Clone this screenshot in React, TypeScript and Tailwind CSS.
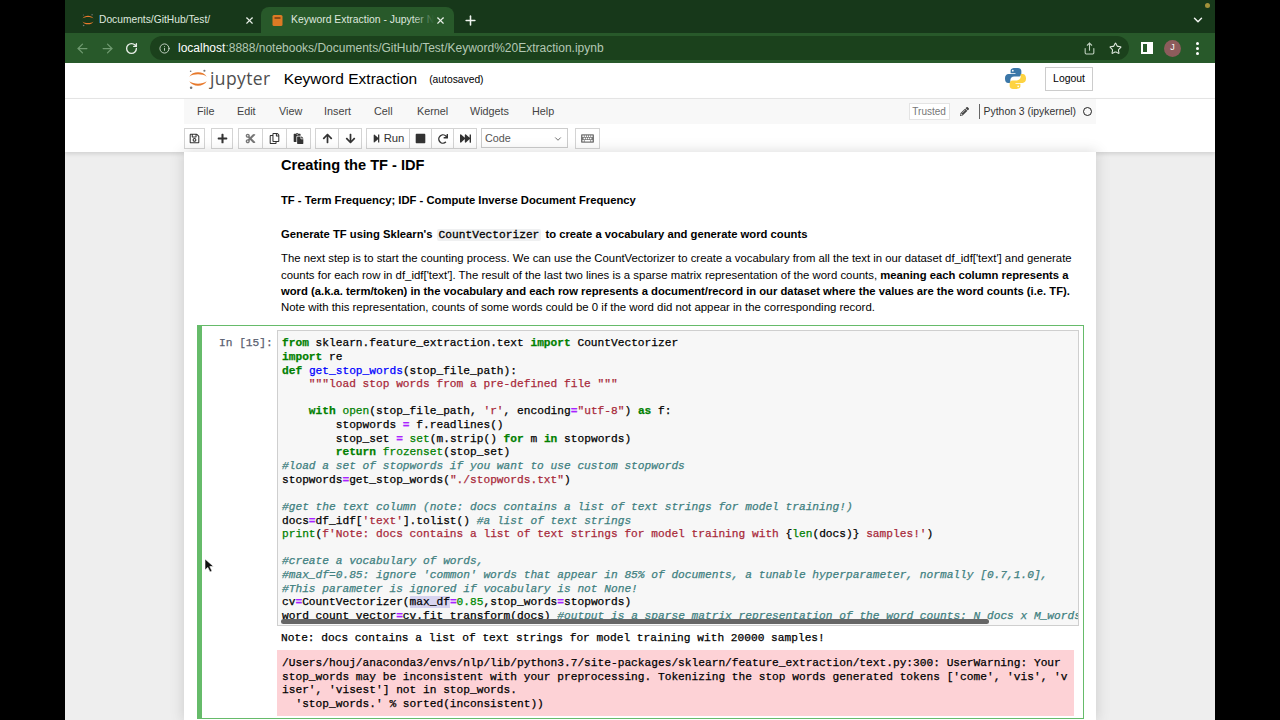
import React from "react";
import { ArrowLeft, ArrowRight, RotateCw, Info, Share, Star, ChevronDown, Plus, X } from "lucide-react";
import { FaRegSave, FaPlus, FaCut, FaRegCopy, FaPaste, FaArrowUp, FaArrowDown, FaStepForward, FaStop, FaRedo, FaFastForward, FaKeyboard, FaPencilAlt } from "react-icons/fa";

const JupyterLogo = ({ size = 24 }: { size?: number }) => (
  <svg width={size} height={size} viewBox="0 0 24 24">
    <path d="M2.5 9.5 C6 3 18 3 21.5 9.5 C17 6 7 6 2.5 9.5 Z" fill="#e8792b" />
    <path d="M2.5 14.5 C6 21 18 21 21.5 14.5 C17 18 7 18 2.5 14.5 Z" fill="#e8792b" />
    <circle cx="19" cy="3" r="1.2" fill="#767677" />
    <circle cx="4" cy="3.5" r="0.9" fill="#767677" />
    <circle cx="4.5" cy="21.5" r="1.4" fill="#767677" />
  </svg>
);

const PythonLogo = () => (
  <svg width="23" height="23" viewBox="0 0 24 24">
    <path d="M11.8 1C7.2 1 6.9 3 6.9 3.8V6.6h5.1v.8H4.6C2.6 7.4 1 9 1 12s1.4 4.8 3.4 4.8h2.2v-3c0-2.2 1.8-3.8 3.9-3.8h4.6c1.7 0 3-1.4 3-3V3.9C18.1 2.2 16.4 1 14.6 1z" fill="#3b77a8" />
    <circle cx="9.2" cy="3.8" r="0.9" fill="#fff" />
    <path d="M12.2 23c4.6 0 4.9-2 4.9-2.8v-2.8H12v-.8h7.4c2 0 3.6-1.6 3.6-4.6s-1.4-4.8-3.4-4.8h-2.2v3c0 2.2-1.8 3.8-3.9 3.8H8.9c-1.7 0-3 1.4-3 3v3.1C5.9 21.8 7.6 23 9.4 23z" fill="#fdd341" />
    <circle cx="14.8" cy="20.2" r="0.9" fill="#fff" />
  </svg>
);

const K = ({ children }: { children: React.ReactNode }) => <span className="font-bold text-[#008000]">{children}</span>;
const B = ({ children }: { children: React.ReactNode }) => <span className="text-[#008000]">{children}</span>;
const S = ({ children }: { children: React.ReactNode }) => <span className="text-[#a8293a]">{children}</span>;
const C = ({ children }: { children: React.ReactNode }) => <span className="italic text-[#408080]">{children}</span>;
const O = ({ children }: { children: React.ReactNode }) => <span className="font-bold text-[#aa22ff]">{children}</span>;

const L = ({ children }: { children?: React.ReactNode }) => <div className="h-[13.65px]">{children}</div>;

const Btn = ({ children, className = "" }: { children: React.ReactNode; className?: string }) => (
  <div className={"flex h-[21px] items-center justify-center border border-[#d4d4d4] bg-white text-[#333] " + className}>{children}</div>
);

export default function App() {
  return (
    <div className="flex h-[720px] w-[1280px] overflow-hidden bg-black font-['Liberation_Sans',Arial,sans-serif]">
      <div className="w-[65px] shrink-0 bg-black" />
      <div className="flex w-[1150px] shrink-0 flex-col bg-[#eeeeee]">
        {/* tab strip */}
        <div className="relative flex h-[33px] shrink-0 items-end bg-[#17381a] pl-[1px]">
          <div className="flex h-[26px] w-[195px] items-center pl-[15px] pr-[6px] text-[#dfe8df]">
            <JupyterLogo size={14} />
            <span className="ml-[4px] text-[10.25px]">Documents/GitHub/Test/</span>
            <X size={11} strokeWidth={2.5} className="ml-auto text-[#e8efe8]" />
          </div>
          <div className="relative flex h-[26px] w-[193px] items-center rounded-t-lg bg-[#28592a] pl-[11px] pr-[8px] text-[10.4px] text-[#dfe8df]">
            <svg width="11" height="13" viewBox="0 0 11 13" className="mr-[8px] shrink-0"><rect x="0.5" y="1" width="10" height="11" rx="1.5" fill="#dd7a24" /><rect x="2.5" y="3" width="6" height="2" fill="#8c4b14" /></svg>
            <span className="w-[143px] overflow-hidden whitespace-nowrap pb-[1px]">Keyword Extraction - Jupyter Notebook</span>
            <div className="absolute right-[20px] top-0 h-full w-[22px] bg-gradient-to-r from-transparent to-[#28592a]" />
            <X size={11} strokeWidth={2.5} className="ml-auto shrink-0 text-[#e8efe8]" />
          </div>
          <Plus size={15} strokeWidth={2.5} className="mb-[5px] ml-[9px] text-[#f0f4f0]" />
          <ChevronDown size={14} strokeWidth={2.5} className="mb-[6px] ml-auto mr-[10px] text-[#f0f4f0]" />
          <div className="absolute right-[5px] top-[3px] h-[5px] w-[5px] rounded-full bg-[#a3913a]" />
        </div>
        {/* url bar */}
        <div className="flex h-[30px] shrink-0 items-center bg-[#28592a] pl-[10px] pr-[10px] text-[#e8efe8]">
          <ArrowLeft size={15} className="text-[#6f9a70]" />
          <ArrowRight size={15} className="ml-[10px] text-[#6f9a70]" />
          <RotateCw size={13} strokeWidth={2.5} className="ml-[10px]" />
          <div className="ml-[12px] flex h-[24px] w-[979px] items-center rounded-full bg-[#1b411c] pl-[9px] pr-[1px]">
            <Info size={11} className="text-[#d0dcd0]" />
            <span className="ml-[8px] text-[12px] text-[#b4c8b4]"><span className="text-white">localhost</span>:8888/notebooks/Documents/GitHub/Test/Keyword%20Extraction.ipynb</span>
            <Share size={13} className="ml-auto text-[#c2d2c2]" />
            <Star size={13} className="ml-[13px] mr-[6px] text-[#dfe8df]" />
          </div>
          <div className="ml-[12px] flex h-[12px] w-[12px] border-2 border-white"><div className="ml-auto h-full w-[4px] bg-white" /></div>
          <div className="ml-[11px] flex h-[17px] w-[17px] items-center justify-center rounded-full bg-[#8d5c5c] text-[9px] text-white">J</div>
          <div className="ml-[15px] flex flex-col gap-[2px]">
            <div className="h-[3px] w-[3px] rounded-full bg-white" />
            <div className="h-[3px] w-[3px] rounded-full bg-white" />
            <div className="h-[3px] w-[3px] rounded-full bg-white" />
          </div>
        </div>
        {/* header */}
        <div className="flex h-[36px] shrink-0 items-center border-b border-[#e7e7e7] bg-white pb-[4px] pl-[122px] pr-[122px]">
          <JupyterLogo size={22} />
          <span className="ml-[1px] font-['Open_Sans','Liberation_Sans',sans-serif] text-[17.5px] tracking-[0.4px] text-[#4e4e4e]">jupyter</span>
          <span className="ml-[13px] text-[15.5px] text-black">Keyword Extraction</span>
          <span className="ml-[12px] mt-[2px] text-[10.3px] text-black">(autosaved)</span>
          <div className="ml-auto"><PythonLogo /></div>
          <div className="ml-[18px] flex h-[24px] w-[48px] items-center justify-center border border-[#cccccc] text-[10.4px] text-black">Logout</div>
        </div>
        {/* menu + toolbar band */}
        <div className="shrink-0 bg-white pl-[119px] pr-[119px] shadow-[0_2px_4px_rgba(0,0,0,0.12)]">
          <div className="flex h-[25px] items-center bg-[#f8f8f8] pl-[13px] pr-[4px] text-[10.8px] text-[#444]">
            <span className="w-[40px]">File</span>
            <span className="w-[42px]">Edit</span>
            <span className="w-[45px]">View</span>
            <span className="w-[50px]">Insert</span>
            <span className="w-[43px]">Cell</span>
            <span className="w-[53px]">Kernel</span>
            <span className="w-[62px]">Widgets</span>
            <span>Help</span>
            <div className="ml-auto flex h-[17px] w-[41px] items-center justify-center border border-[#e4e4e4] bg-white text-[10px] text-[#777]">Trusted</div>
            <FaPencilAlt size={9} className="ml-[10px] text-[#444]" />
            <div className="ml-[10px] h-[15px] w-px bg-[#666]" />
            <span className="ml-[4px] text-[10.4px] text-[#333]">Python 3 (ipykernel)</span>
            <div className="ml-[7px] h-[9px] w-[9px] rounded-full border-[1.5px] border-[#222]" />
          </div>
          <div className="flex h-[28px] items-start bg-white pt-[4px] text-[#333]">
            <Btn className="w-[21px]"><FaRegSave size={11} /></Btn>
            <Btn className="ml-[6px] w-[22px]"><FaPlus size={11} /></Btn>
            <Btn className="ml-[5px] w-[25px]"><FaCut size={11} className="text-[#777]" /></Btn>
            <Btn className="ml-[-1px] w-[25px]"><FaRegCopy size={11} /></Btn>
            <Btn className="ml-[-1px] w-[25px]"><FaPaste size={11} /></Btn>
            <Btn className="ml-[4px] w-[24px]"><FaArrowUp size={11} /></Btn>
            <Btn className="ml-[-1px] w-[24px]"><FaArrowDown size={11} /></Btn>
            <Btn className="ml-[4px] w-[44px] text-[11.3px]"><FaStepForward size={9} className="mr-[3px]" />Run</Btn>
            <Btn className="ml-[-1px] w-[23px]"><FaStop size={11} /></Btn>
            <Btn className="ml-[-1px] w-[23px]"><FaRedo size={10} /></Btn>
            <Btn className="ml-[-1px] w-[24px]"><FaFastForward size={11} /></Btn>
            <div className="ml-[4px] flex h-[20px] w-[87px] items-center border border-[#cccccc] bg-white pl-[3px] pr-[4px] pt-[1px] text-[10.8px] text-[#555]">
              Code
              <ChevronDown size={10} className="ml-auto" />
            </div>
            <Btn className="ml-[7px] w-[25px]"><FaKeyboard size={13} className="text-[#777]" /></Btn>
          </div>
        </div>
        {/* notebook */}
        <div className="ml-[119px] w-[912px] flex-1 overflow-hidden bg-white shadow-[0_0_12px_1px_rgba(87,87,87,0.2)]">
          <div className="whitespace-nowrap pl-[97px] pr-[20px] text-[11.4px] leading-[16.2px] text-black">
            <div className="pt-[4px] text-[14.6px] font-bold leading-[18px]">Creating the TF - IDF</div>
            <div className="pt-[18px] text-[11.25px] font-bold">TF - Term Frequency; IDF - Compute Inverse Document Frequency</div>
            <div className="pt-[18px] text-[11.25px] font-bold">
              Generate TF using Sklearn's <code className="mx-[1px] rounded-[2px] bg-[#eff0f1] px-[2px] font-['Liberation_Mono',monospace] text-[11.2px] font-normal [-webkit-text-stroke:0.3px]">CountVectorizer</code> to create a vocabulary and generate word counts
            </div>
            <div className="pt-[7px]">
              <span className="text-[11.34px]">The next step is to start the counting process. We can use the CountVectorizer to create a vocabulary from all the text in our dataset df_idf['text'] and generate</span><br />
              counts for each row in df_idf['text']. The result of the last two lines is a sparse matrix representation of the word counts, <b className="text-[11.25px]">meaning each column represents a</b><br />
              <b className="text-[11.25px]">word (a.k.a. term/token) in the vocabulary and each row represents a document/record in our dataset where the values are the word counts (i.e. TF).</b><br />
              Note with this representation, counts of some words could be 0 if the word did not appear in the corresponding record.
            </div>
          </div>
          {/* cell */}
          <div className="ml-[13px] mt-[10px] flex h-[394px] w-[887px] flex-col border border-[#66bb6a] border-l-[5px] pl-[75px] pr-[4px] pt-[4px] font-['Liberation_Mono',monospace] text-[11.2px] leading-[13.65px] text-black [-webkit-text-stroke:0.25px]">
            <div className="relative">
              <div className="absolute left-[-58px] top-[7px] text-[#5a6070]">In [15]:</div>
              <div className="relative h-[296px] overflow-hidden whitespace-pre border border-[#cfcfcf] bg-[#f7f7f7] pl-[4px] pt-[6px]">
                <L><K>from</K> sklearn.feature_extraction.text <K>import</K> CountVectorizer</L>
                <L><K>import</K> re</L>
                <L><K>def</K> <span className="text-[#0000ff]">get_stop_words</span>(stop_file_path):</L>
                <L>    <S>"""load stop words from a pre-defined file """</S></L>
                <L />
                <L>    <K>with</K> <B>open</B>(stop_file_path, <S>'r'</S>, encoding<O>=</O><S>"utf-8"</S>) <K>as</K> f:</L>
                <L>        stopwords <O>=</O> f.readlines()</L>
                <L>        stop_set <O>=</O> <B>set</B>(m.strip() <K>for</K> m <K>in</K> stopwords)</L>
                <L>        <K>return</K> <B>frozenset</B>(stop_set)</L>
                <L><C>#load a set of stopwords if you want to use custom stopwords</C></L>
                <L>stopwords<O>=</O>get_stop_words(<S>"./stopwords.txt"</S>)</L>
                <L />
                <L><C>#get the text column (note: docs contains a list of text strings for model training!)</C></L>
                <L>docs<O>=</O>df_idf[<S>'text'</S>].tolist() <C>#a list of text strings</C></L>
                <L><B>print</B>(<S>f'Note: docs contains a list of text strings for model training with </S>{"{"}<B>len</B>(docs){"}"}<S> samples!'</S>)</L>
                <L />
                <L><C>#create a vocabulary of words,</C></L>
                <L><C>#max_df=0.85: ignore 'common' words that appear in 85% of documents, a tunable hyperparameter, normally [0.7,1.0],</C></L>
                <L><C>#This parameter is ignored if vocabulary is not None!</C></L>
                <L>cv<O>=</O>CountVectorizer(<span className="bg-[#d7d4f0]">max_df</span><O>=</O><span className="text-[#008800]">0.85</span>,stop_words<O>=</O>stopwords)</L>
                <L>word_count_vector<O>=</O>cv.fit_transform(docs) <C>#output is a sparse matrix representation of the word counts: N_docs x M_words</C></L>
                <div className="absolute bottom-[1px] left-[3px] h-[5px] w-[708px] rounded-full bg-[#666666]" />
              </div>
            </div>
            <div className="whitespace-pre pl-[4px] pt-[6px]">Note: docs contains a list of text strings for model training with 20000 samples!</div>
            <div className="mr-[5px] mt-[4px] whitespace-pre bg-[#fdd2d6] pb-[4px] pl-[5px] pt-[7px]">
              /Users/houj/anaconda3/envs/nlp/lib/python3.7/site-packages/sklearn/feature_extraction/text.py:300: UserWarning: Your<br />
              stop_words may be inconsistent with your preprocessing. Tokenizing the stop words generated tokens ['come', 'vis', 'v<br />
              iser', 'visest'] not in stop_words.<br />
              {"  'stop_words.' % sorted(inconsistent))"}
            </div>
          </div>
        </div>
      </div>
      <div className="w-[65px] shrink-0 bg-black" />
      <svg width="11" height="15" viewBox="0 0 11 15" className="absolute left-[204px] top-[558px]"><path d="M1 1 L1 12 L3.8 9.4 L6 14 L8 13 L5.8 8.6 L9.5 8.4 Z" fill="#111" stroke="#fff" strokeWidth="0.6" /></svg>
    </div>
  );
}
